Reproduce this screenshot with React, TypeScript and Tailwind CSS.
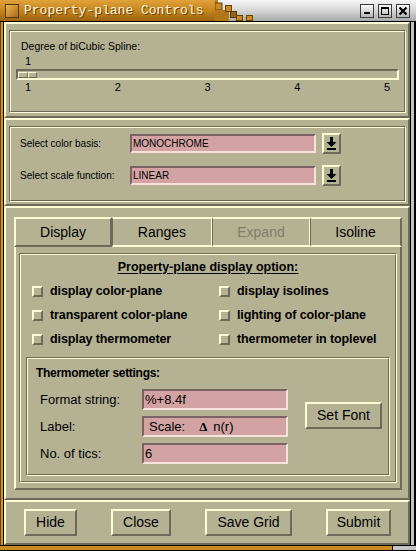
import React from "react";

// Motif style property-plane dialog

const raised =
  "border-2 border-t-[#fffbd6] border-l-[#fffbd6] border-b-[#6d6b58] border-r-[#6d6b58]";
const raised1 =
  "border border-t-[#fffbd6] border-l-[#fffbd6] border-b-[#6d6b58] border-r-[#6d6b58]";
const inputCls =
  "bg-[#d3a3a3] border-2 border-t-[#7a6363] border-l-[#7a6363] border-b-[#f7e2dc] border-r-[#f7e2dc] flex items-center";

const Etched: React.FC<{ className?: string; inner?: string; children?: React.ReactNode }> = ({
  className = "",
  inner = "",
  children,
}) => (
  <div
    className={
      "border border-t-[#6d6b58] border-l-[#6d6b58] border-b-[#fffbd6] border-r-[#fffbd6] " + className
    }
  >
    <div
      className={
        "h-full border border-t-[#fffbd6] border-l-[#fffbd6] border-b-[#6d6b58] border-r-[#6d6b58] " + inner
      }
    >
      {children}
    </div>
  </div>
);

const ArrowBtn = () => (
  <div className={"w-[19px] h-[21px] flex items-center justify-center bg-[#b5b294] " + raised}>
    <svg width="13" height="15" viewBox="0 0 13 15">
      <rect x="5" y="1" width="3" height="6" fill="#000" />
      <polygon points="1.5,6 11.5,6 6.5,11" fill="#000" />
      <rect x="2" y="12" width="9" height="2" fill="#000" />
    </svg>
  </div>
);

const Check: React.FC<{ label: string }> = ({ label }) => (
  <div className="flex items-center h-[24px]">
    <div className={"w-[11px] h-[11px] bg-[#b5b294] " + raised}></div>
    <span className="ml-[7px] text-[12.5px] font-bold tracking-[-0.1px] text-black">{label}</span>
  </div>
);

const Btn: React.FC<{ label: string; w: string }> = ({ label, w }) => (
  <div className={"h-[27px] flex items-center justify-center text-[14px] text-black " + w + " " + raised}>
    {label}
  </div>
);

const WinBtn: React.FC<{ kind: "min" | "max" | "close" }> = ({ kind }) => (
  <div className="w-[14px] h-[14px] border border-[#3a3a3a] bg-gradient-to-b from-[#fafafa] to-[#b8b8b8] flex items-center justify-center">
    <svg width="10" height="10" viewBox="0 0 10 10">
      {kind === "min" && <rect x="2" y="6" width="6" height="2" fill="#000" />}
      {kind === "max" && (
        <>
          <rect x="1.5" y="1.5" width="7" height="7" fill="none" stroke="#000" strokeWidth="1" />
          <rect x="1" y="1" width="8" height="2" fill="#000" />
        </>
      )}
      {kind === "close" && (
        <path d="M1.5 1.5 L8.5 8.5 M8.5 1.5 L1.5 8.5" stroke="#000" strokeWidth="2.2" />
      )}
    </svg>
  </div>
);

export default function App() {
  return (
    <div className="w-[416px] h-[551px] bg-black flex flex-col overflow-hidden font-[family-name:'Liberation_Sans',Arial,sans-serif]">
      {/* title bar */}
      <div className="h-[21px] flex bg-gradient-to-b from-[#f6f6f6] via-[#d6d6d6] to-[#a9a9a9]">
        <div className="w-[215px] h-full flex items-center bg-gradient-to-b from-[#e2a23a] via-[#c6861e] to-[#9c6410]">
          <div className="ml-[5px] w-[14px] h-[14px] border border-[#5a3604] bg-gradient-to-br from-[#f0b850] to-[#a86c14]"></div>
          <span className="ml-[5px] text-[13px] leading-none text-[#fff6dc] font-[family-name:'Liberation_Mono',monospace] [text-shadow:1px_1px_0_#6a4004]">
            Property-plane Controls
          </span>
        </div>
        <svg width="40" height="21" viewBox="0 0 40 21" className="shrink-0">
          <rect x="0" y="0" width="3" height="21" fill="#b87a1a" />
          <rect x="0" y="3" width="7" height="7" fill="#c98a22" stroke="#6a4206" strokeWidth="1" />
          <rect x="0" y="10" width="14" height="11" fill="#b47618" />
          <rect x="10.5" y="5.5" width="6" height="6" fill="#c98a22" stroke="#6a4206" strokeWidth="1" />
          <rect x="15.5" y="11.5" width="6" height="6" fill="#9a6410" stroke="#5a3604" strokeWidth="1" />
          <rect x="21.5" y="15.5" width="6" height="5" fill="#c98a22" stroke="#6a4206" strokeWidth="1" />
          <rect x="31.5" y="15.5" width="6" height="5" fill="#c98a22" stroke="#6a4206" strokeWidth="1" />
        </svg>
        <div className="flex-1 flex items-center justify-end gap-[4px] pr-[6px]">
          <WinBtn kind="min" />
          <WinBtn kind="max" />
          <WinBtn kind="close" />
        </div>
      </div>
      <div className="h-[1px] bg-black"></div>

      {/* middle */}
      <div className="flex h-[523px]">
        <div className="w-[4px] h-full border-l border-l-[#6a4206] border-r border-r-black bg-[#d09030]"></div>

        <div className="w-[406px] h-full bg-[#b5b294] flex flex-col text-black">
          {/* slider panel */}
          <div className={"h-[96px] pt-[6px] pl-[3px] pr-[2px] pb-[3px] " + raised}>
            <Etched className="h-full" inner="flex flex-col">
              <div className="mt-[8px] ml-[10px] h-[14px] flex items-center text-[10.5px]">
                Degree of biCubic Spline:
              </div>
              <div className="ml-[13px] w-[8px] h-[14px] flex items-center justify-center text-[11px]">1</div>
              <div className="mt-[1px] mx-[5px] h-[11px] border-2 border-t-[#6d6b58] border-l-[#6d6b58] border-b-[#fffbd6] border-r-[#fffbd6] bg-[#b5b294]">
                <div className="mt-[1px] w-[19px] h-[6px] flex">
                  <div className={"w-[10px] h-full " + raised1}></div>
                  <div className={"w-[9px] h-full " + raised1}></div>
                </div>
              </div>
              <div className="mx-[13px] h-[14px] flex justify-between items-center text-[11px]">
                {["1", "2", "3", "4", "5"].map((n) => (
                  <span key={n} className="w-[8px] text-center">
                    {n}
                  </span>
                ))}
              </div>
            </Etched>
          </div>

          {/* select panel */}
          <div className={"h-[88px] pt-[6px] pl-[3px] pr-[2px] pb-[2px] " + raised}>
            <Etched className="h-full" inner="flex flex-col pt-[5px] pl-[9px] gap-[11px]">
              {[
                ["Select color basis:", "MONOCHROME"],
                ["Select scale function:", "LINEAR"],
              ].map(([label, value]) => (
                <div key={label} className="h-[21px] flex items-center">
                  <span className="w-[110px] text-[10px]">{label}</span>
                  <div className={"w-[186px] h-[19px] pl-[1px] text-[10px] " + inputCls}>{value}</div>
                  <div className="ml-[6px]">
                    <ArrowBtn />
                  </div>
                </div>
              ))}
            </Etched>
          </div>

          {/* notebook panel */}
          <div className={"h-[294px] pt-[9px] pl-[8px] pr-[6px] pb-[8px] flex flex-col " + raised}>
            <div className="h-[30px] flex text-[14px]">
              <div className={"w-[98px] h-full flex items-center justify-center " + raised}>Display</div>
              <div className="w-[100px] h-full flex items-center justify-center border-t-2 border-t-[#fffbd6] border-l border-l-[#6d6b58] border-r border-r-[#fffbd6] border-b-2 border-b-[#fffbd6]">
                Ranges
              </div>
              <div className="w-[98px] h-full flex items-center justify-center text-[#807e69] border-t-2 border-t-[#fffbd6] border-l border-l-[#6d6b58] border-r border-r-[#fffbd6] border-b-2 border-b-[#fffbd6]">
                Expand
              </div>
              <div className="w-[92px] h-full flex items-center justify-center border-t-2 border-t-[#fffbd6] border-l border-l-[#6d6b58] border-r-2 border-r-[#6d6b58] border-b-2 border-b-[#fffbd6]">
                Isoline
              </div>
            </div>
            <div className="flex-1 border-l-2 border-l-[#fffbd6] border-r-2 border-r-[#6d6b58] border-b-2 border-b-[#6d6b58] pt-[6px] pl-[3px] pr-[3px] pb-[5px]">
              <Etched className="h-full" inner="flex flex-col">
                <div className="h-[24px] flex items-center justify-center text-[12.5px] font-bold underline underline-offset-2">
                  Property-plane display option:
                </div>
                <div className="grid grid-cols-[187px_1fr] pl-[11px]">
                  <Check label="display color-plane" />
                  <Check label="display isolines" />
                  <Check label="transparent color-plane" />
                  <Check label="lighting of color-plane" />
                  <Check label="display thermometer" />
                  <Check label="thermometer in toplevel" />
                </div>
                <div className="mt-[6px] mx-[5px]">
                  <Etched className="h-[119px]" inner="flex flex-col">
                    <div className="h-[28px] pl-[8px] flex items-center text-[12px] font-bold tracking-[-0.3px]">
                      Thermometer settings:
                    </div>
                    <div className="mt-[2px] flex">
                      <div className="pl-[12px] flex flex-col gap-[6px]">
                        <div className="h-[21px] flex items-center">
                          <span className="w-[102px] text-[13px]">Format string:</span>
                          <div className={"w-[146px] h-[21px] pl-[1px] text-[13px] " + inputCls}>%+8.4f</div>
                        </div>
                        <div className="h-[21px] flex items-center">
                          <span className="w-[102px] text-[13px]">Label:</span>
                          <div className={"w-[146px] h-[21px] pl-[5px] text-[13px] " + inputCls}>
                            <span>Scale:</span>
                            <span className="ml-[14px] font-bold font-[family-name:'Liberation_Serif',serif]">Δ</span>
                            <span className="ml-[6px]">n(r)</span>
                          </div>
                        </div>
                        <div className="h-[21px] flex items-center">
                          <span className="w-[102px] text-[13px]">No. of tics:</span>
                          <div className={"w-[146px] h-[21px] pl-[1px] text-[13px] " + inputCls}>6</div>
                        </div>
                      </div>
                      <div className="ml-[17px] mt-[13px]">
                        <Btn label="Set Font" w="w-[77px]" />
                      </div>
                    </div>
                  </Etched>
                </div>
              </Etched>
            </div>
          </div>

          {/* button panel */}
          <div className={"h-[45px] pt-[7px] pl-[18px] flex gap-[34px] " + raised}>
            <Btn label="Hide" w="w-[53px]" />
            <Btn label="Close" w="w-[60px]" />
            <Btn label="Save Grid" w="w-[87px]" />
            <Btn label="Submit" w="w-[65px]" />
          </div>
        </div>

        <div className="w-[6px] h-full border-l border-l-black border-r-2 border-r-black bg-[#c4c4c4]"></div>
      </div>

      {/* bottom frame */}
      <div className="h-[6px] flex border-t border-t-black border-b border-b-black">
        <div className="flex-1 bg-[#c98a22]"></div>
        <div className="w-[24px] bg-[#c4c4c4] border-l border-l-black"></div>
      </div>
    </div>
  );
}
